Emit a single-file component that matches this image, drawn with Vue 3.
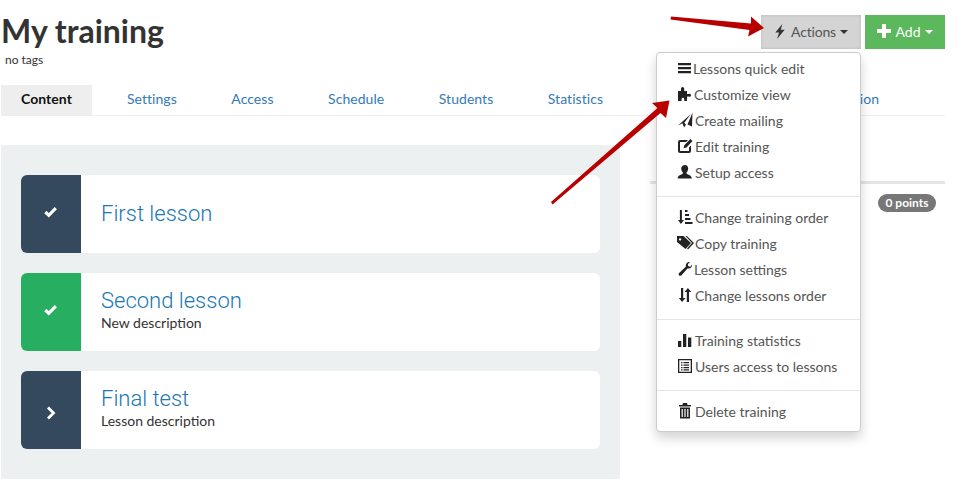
<script setup>
const tabs = ['Settings', 'Access', 'Schedule', 'Students', 'Statistics']
const lessons = [
  { title: 'First lesson', desc: '', icon: 'check', tone: 'navy' },
  { title: 'Second lesson', desc: 'New description', icon: 'check', tone: 'green' },
  { title: 'Final test', desc: 'Lesson description', icon: 'chevron', tone: 'navy' },
]
const groups = [
  [
    { label: 'Lessons quick edit', icon: 'bars', w: 16 },
    { label: 'Customize view', icon: 'puzzle', w: 17 },
    { label: 'Create mailing', icon: 'plane', w: 18 },
    { label: 'Edit training', icon: 'edit', w: 18 },
    { label: 'Setup access', icon: 'user', w: 18 },
  ],
  [
    { label: 'Change training order', icon: 'order', w: 18 },
    { label: 'Copy training', icon: 'tags', w: 18 },
    { label: 'Lesson settings', icon: 'wrench', w: 17 },
    { label: 'Change lessons order', icon: 'sort', w: 18 },
  ],
  [
    { label: 'Training statistics', icon: 'stats', w: 18 },
    { label: 'Users access to lessons', icon: 'list', w: 18 },
  ],
  [{ label: 'Delete training', icon: 'trash', w: 18 }],
]
</script>

<template>
  <div class="page">
    <header class="head">
      <div>
        <h1 class="title">My training</h1>
        <div class="tags">no tags</div>
      </div>
      <div class="buttons">
        <button class="btn actions">
          <svg class="bolt" viewBox="0 0 12 16" width="12" height="15"><path d="M8.500 0 1 9h4L2.800 16 11 6H6.800L8.500 0Z" fill="#333" /></svg>
          <span class="act-label">Actions</span> <span class="caret"></span>
        </button>
        <button class="btn add">
          <svg viewBox="0 0 14 14" width="14" height="14"><path d="M5 0h4v5h5v4H9v5H5V9H0V5h5Z" fill="#fff" /></svg>
          Add <span class="caret"></span>
        </button>
      </div>
    </header>

    <nav class="tabs">
      <a class="tab active">Content</a>
      <a v-for="t in tabs" :key="t" class="tab">{{ t }}</a>
      <a class="tab last">Gamification</a>
    </nav>

    <main class="main">
      <section class="panel">
        <article v-for="l in lessons" :key="l.title" class="card">
          <div class="badge-box" :class="l.tone">
            <svg v-if="l.icon === 'check'" class="mark-check" viewBox="0 0 14 12" width="15" height="12"><path d="M1.800 6 5.300 9.300 12.300 2.200" fill="none" stroke="#fff" stroke-width="3.200" /></svg>
            <svg v-else class="mark-next" viewBox="0 0 10 14" width="10" height="14"><path d="M2 1.500 7.500 7 2 12.500" fill="none" stroke="#fff" stroke-width="2.800" /></svg>
          </div>
          <div class="card-body">
            <div class="card-title">{{ l.title }}</div>
            <div v-if="l.desc" class="card-desc">{{ l.desc }}</div>
          </div>
        </article>
      </section>
      <aside class="side">
        <div class="rule"></div>
        <span class="points">0 points</span>
      </aside>
    </main>

    <div class="menu">
      <div v-for="(g, i) in groups" :key="i" class="group">
        <div v-for="it in g" :key="it.label" class="item">
          <span class="slot" :style="{ width: it.w + 'px' }">
            <svg viewBox="0 0 16 16" width="16" height="16" class="ico">
              <path v-if="it.icon === 'bars'" d="M1 3h13v2.200H1ZM1 7h13v2.200H1ZM1 11h13v2.200H1Z" />
              <path v-else-if="it.icon === 'puzzle'" d="M4 2.500a1.600 1.600 0 0 1 3.200 0V5H10v3h1.600a1.500 1.500 0 1 1 0 2.400H10V15H7.200v-2a1.300 1.300 0 0 0-2.600 0v2H1V5h3Z" />
              <path v-else-if="it.icon === 'plane'" d="M15.500 .5 15 14.500 10.500 12.500ZM14 2 1 13.500 5.500 11.300 7 15.500 9 12.800 7.300 10.800Z" />
              <path v-else-if="it.icon === 'edit'" fill-rule="evenodd" d="M3 2h8L9.200 4H3.400C3 4 3 4.300 3 4.600v7.800c0 .4.2.6.6.6h7.800c.4 0 .6-.2.6-.6V9.500l2-2V13a2 2 0 0 1-2 2H3a2 2 0 0 1-2-2V4a2 2 0 0 1 2-2Zm10.400-1L15.500 3 9.500 9.500l-3 .8.800-3Z" />
              <path v-else-if="it.icon === 'user'" d="M8 1c2 0 3.200 1.500 3.200 3.600 0 1.700-.8 3.200-1.700 4 0 1 .2 1.500 1.500 2 1.800.7 3.500 1.200 3.800 3.900H.6C.9 11.800 2.600 11.300 4.400 10.600c1.300-.5 1.500-1 1.500-2-.9-.8-1.700-2.300-1.700-4C4.200 2.500 6 1 8 1Z" />
              <path v-else-if="it.icon === 'order'" d="M2.900 1h2v10h2L3.900 15 1 11h1.900ZM8 1h2.500v2H8ZM8 5h4v2H8ZM8 9h5.500v2H8ZM8 13h7.500v2H8Z" />
              <path v-else-if="it.icon === 'tags'" fill-rule="evenodd" d="M0 1h6.500L14 8l-5.500 6L0 7ZM3 3.200a1.200 1.200 0 1 0 .1 0ZM8.500 1h1.400L17 8l-6 6.500-1-1 5-5.500Z" />
              <path v-else-if="it.icon === 'wrench'" d="M15 3.500c.5 2.500-1.800 4.800-4.500 3.900L4.300 14.500c-1.500 1.200-3.500-.8-2.400-2.300L9 5.600C8.100 3 10.300.5 13 1L10.800 3.300l.6 2 2 .5Z" />
              <path v-else-if="it.icon === 'sort'" d="M3 1h2.200v10H7.500L4.100 15 .8 11H3ZM11 15h-2.200V5H6.500L9.900 1l3.300 4H11Z" transform="translate(1 0)" />
              <path v-else-if="it.icon === 'stats'" d="M1 9h3.300v6H1ZM6 2h3.300v13H6ZM11 5.500h3.300V15H11Z" />
              <path v-else-if="it.icon === 'list'" fill-rule="evenodd" d="M1 1h14v14H1Zm1.300 1.300v11.400h11.400V2.300ZM4 4h1.500v1.300H4Zm2.500 0h5.500v1.300H6.500ZM4 6.500h1.500v1.300H4Zm2.500 0h5.500v1.300H6.500ZM4 9h1.500v1.300H4Zm2.500 0h5.500v1.300H6.500ZM4 11.300h1.500v1.300H4Zm2.500 0h5.500v1.300H6.500Z" />
              <path v-else-if="it.icon === 'trash'" fill-rule="evenodd" d="M6 0h4l.6 2H14v1.500H2V2h3.400ZM3 4.500h10V15.500H3ZM4.600 6v8h1.200V6Zm2.800 0v8h1.200V6Zm2.800 0v8h1.200V6Z" />
            </svg>
          </span>
          <span>{{ it.label }}</span>
        </div>
      </div>
    </div>

    <svg class="arrows" viewBox="0 0 964 494" width="964" height="494">
      <path d="M671 16.500 670.500 19.500 749.500 30 748 36.500 764 28 751 16.500 751 23.500Z" fill="#b90000" />
      <path d="M551 202 552.500 204.500 660.500 113 666 118 669.500 100.500 652 103 657.500 108Z" fill="#b90000" />
    </svg>
  </div>
</template>

<style>
html, body { margin: 0; background: #fff; }
</style>

<style scoped>
.page {
  position: relative;
  width: 964px;
  height: 494px;
  overflow: hidden;
  box-sizing: border-box;
  padding: 0 19px 0 1px;
  font-family: Lato, "Open Sans", sans-serif;
  color: #333;
}
.head {
  display: flex;
  justify-content: space-between;
  height: 85px;
}
.title {
  margin: 12px 0 0;
  font-size: 32px;
  line-height: 38px;
  font-weight: 700;
  color: #333;
}
.tags {
  margin: 2px 0 0 4px;
  font-size: 12px;
  line-height: 16px;
}
.buttons {
  display: flex;
  gap: 4px;
  margin: 15px 0 0;
}
.btn {
  height: 34px;
  box-sizing: border-box;
  border: 0;
  padding: 0 0 2px;
  font-family: inherit;
  font-size: 14px;
  display: flex;
  align-items: center;
  justify-content: center;
  gap: 4px;
  border-radius: 0;
}
.actions {
  width: 100px;
  background: #d4d4d4;
  box-shadow: inset 0 0 3px rgba(0, 0, 0, .14);
  color: #555;
}
.act-label { letter-spacing: -.2px; }
.add {
  width: 80px;
  background: #5cb85c;
  color: #fff;
}
.caret {
  display: inline-block;
  width: 0;
  height: 0;
  margin-top: 2px;
  border-left: 4px solid transparent;
  border-right: 4px solid transparent;
  border-top: 4px solid currentColor;
}
.actions .caret { color: #333; }
.bolt { margin-right: 1px; }
.tabs {
  display: flex;
  height: 30px;
  border-bottom: 1px solid #eee;
}
.tab {
  padding: 0 20px;
  margin-right: 14.500px;
  font-size: 14px;
  line-height: 28px;
  letter-spacing: .05px;
  color: #337ab7;
}
.tab.active {
  margin-right: 15px;
  background: #eee;
  color: #111;
  font-weight: 700;
}
.tab.last { margin: 0 66px 0 auto; padding: 0; }
.main {
  display: flex;
  margin-top: 29px;
}
.panel {
  width: 579px;
  height: 274px;
  padding: 30px 20px;
  display: flex;
  flex-direction: column;
  gap: 20px;
  background: #ecf0f1;
}
.card {
  display: flex;
  height: 78px;
  background: #fff;
  border-radius: 6px;
  overflow: hidden;
}
.badge-box {
  flex: none;
  width: 60px;
  display: flex;
  align-items: center;
  justify-content: center;
}
.mark-check { margin: -5px 1px 0 0; }
.mark-next { margin-top: 6px; }
.navy { background: #34495e; }
.green { background: #27ae60; }
.card-body {
  padding: 0 0 4px 20px;
  display: flex;
  flex-direction: column;
  justify-content: center;
}
.card-title {
  font-family: Roboto, Lato, sans-serif;
  font-size: 22px;
  line-height: 26px;
  font-weight: 300;
  color: #2077b4;
}
.card-title:only-child { margin-top: 4px; }
.card-desc {
  font-size: 14px;
  line-height: 18px;
  color: #333;
}
.side {
  flex: 1;
  margin-left: 30px;
  display: flex;
  flex-direction: column;
  align-items: flex-end;
}
.rule {
  align-self: stretch;
  margin-top: 36px;
  height: 3px;
  background: #e5e5e5;
}
.points {
  margin: 10px 9px 0 0;
  width: 58px;
  height: 18px;
  line-height: 17px;
  text-align: center;
  font-size: 12px;
  font-weight: 700;
  color: #fff;
  background: #777;
  border-radius: 10px;
}
.menu {
  position: absolute;
  left: 656px;
  top: 52px;
  box-sizing: border-box;
  width: 205px;
  padding: 3px 0 6px;
  background: #fff;
  border: 1px solid #ccc;
  border-radius: 4px;
  box-shadow: 0 6px 12px rgba(0, 0, 0, .175);
  font-size: 14px;
  color: #555;
}
.group + .group {
  margin-top: 10px;
  padding-top: 8px;
  border-top: 1px solid #e5e5e5;
}
.item {
  display: flex;
  align-items: center;
  box-sizing: border-box;
  height: 26px;
  padding: 0 0 2px 20px;
  white-space: nowrap;
}
.slot { flex: none; display: flex; }
.ico { fill: #222; display: block; overflow: visible; }
.arrows {
  position: absolute;
  left: 0;
  top: 0;
  pointer-events: none;
}
</style>
